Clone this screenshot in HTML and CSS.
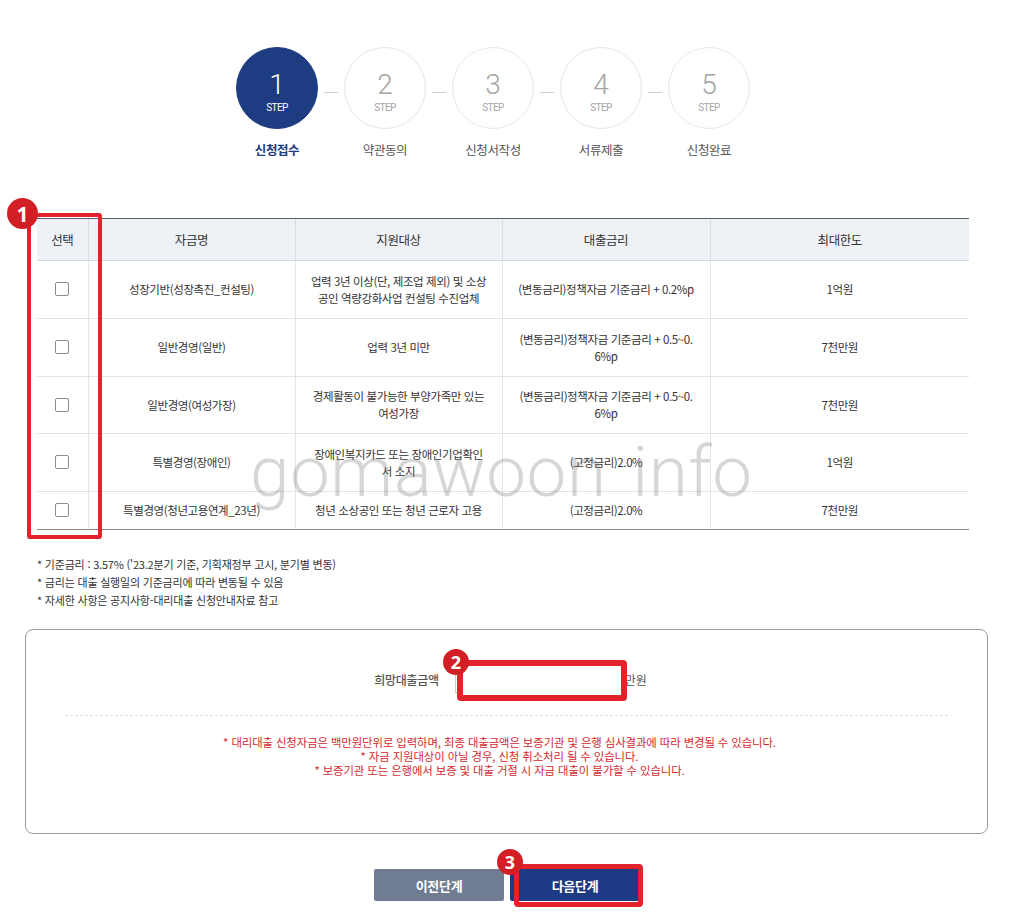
FILE: index.html
```html
<!DOCTYPE html>
<html lang="ko">
<head>
<meta charset="utf-8">
<title>신청접수</title>
<link rel="stylesheet" href="styles.css">
</head>
<body>
<div class="page">
  <div class="steps">
    <div class="step active">
      <div class="circle"><span class="num">1</span><span class="lbl">STEP</span></div>
      <div class="name">신청접수</div>
    </div>
    <div class="dash"></div>
    <div class="step">
      <div class="circle"><span class="num">2</span><span class="lbl">STEP</span></div>
      <div class="name">약관동의</div>
    </div>
    <div class="dash"></div>
    <div class="step">
      <div class="circle"><span class="num">3</span><span class="lbl">STEP</span></div>
      <div class="name">신청서작성</div>
    </div>
    <div class="dash"></div>
    <div class="step">
      <div class="circle"><span class="num">4</span><span class="lbl">STEP</span></div>
      <div class="name">서류제출</div>
    </div>
    <div class="dash"></div>
    <div class="step">
      <div class="circle"><span class="num">5</span><span class="lbl">STEP</span></div>
      <div class="name">신청완료</div>
    </div>
  </div>

  <div class="table-area">
    <table class="fund">
      <colgroup>
        <col class="c1"><col class="c2"><col class="c3"><col class="c4"><col class="c5">
      </colgroup>
      <thead>
        <tr><th>선택</th><th>자금명</th><th>지원대상</th><th>대출금리</th><th>최대한도</th></tr>
      </thead>
      <tbody>
        <tr class="r1">
          <td><input type="checkbox" class="chk"></td>
          <td>성장기반(성장촉진_컨설팅)</td>
          <td>업력 3년 이상(단, 제조업 제외) 및 소상<br>공인 역량강화사업 컨설팅 수진업체</td>
          <td>(변동금리)정책자금 기준금리 + 0.2%p</td>
          <td>1억원</td>
        </tr>
        <tr class="r2">
          <td><input type="checkbox" class="chk"></td>
          <td>일반경영(일반)</td>
          <td>업력 3년 미만</td>
          <td>(변동금리)정책자금 기준금리 + 0.5~0.<br>6%p</td>
          <td>7천만원</td>
        </tr>
        <tr class="r3">
          <td><input type="checkbox" class="chk"></td>
          <td>일반경영(여성가장)</td>
          <td>경제활동이 불가능한 부양가족만 있는<br>여성가장</td>
          <td>(변동금리)정책자금 기준금리 + 0.5~0.<br>6%p</td>
          <td>7천만원</td>
        </tr>
        <tr class="r4">
          <td><input type="checkbox" class="chk"></td>
          <td>특별경영(장애인)</td>
          <td>장애인복지카드 또는 장애인기업확인<br>서 소지</td>
          <td>(고정금리)2.0%</td>
          <td>1억원</td>
        </tr>
        <tr class="r5">
          <td><input type="checkbox" class="chk"></td>
          <td>특별경영(청년고용연계_23년)</td>
          <td>청년 소상공인 또는 청년 근로자 고용</td>
          <td>(고정금리)2.0%</td>
          <td>7천만원</td>
        </tr>
      </tbody>
    </table>

    <ul class="notes">
      <li>* 기준금리 : 3.57% ('23.2분기 기준, 기획재정부 고시, 분기별 변동)</li>
      <li>* 금리는 대출 실행일의 기준금리에 따라 변동될 수 있음</li>
      <li>* 자세한 사항은 공지사항-대리대출 신청안내자료 참고</li>
    </ul>
  </div>

  <div class="amount-box">
    <div class="amount-row">
      <span class="amount-label">희망대출금액</span>
      <input type="text" class="amount-input">
      <span class="unit">만원</span>
    </div>
    <div class="dotline"></div>
    <div class="warn">
      <p>* 대리대출 신청자금은 백만원단위로 입력하며, 최종 대출금액은 보증기관 및 은행 심사결과에 따라 변경될 수 있습니다.</p>
      <p>* 자금 지원대상이 아닐 경우, 신청 취소처리 될 수 있습니다.</p>
      <p>* 보증기관 또는 은행에서 보증 및 대출 거절 시 자금 대출이 불가할 수 있습니다.</p>
    </div>
  </div>

  <div class="buttons">
    <button class="btn prev">이전단계</button>
    <button class="btn next">다음단계</button>
  </div>

  <div class="watermark">gomawoon info</div>

  <div class="mark mark1"></div>
  <div class="badge badge1">1</div>
  <div class="mark mark2"></div>
  <div class="badge badge2">2</div>
  <div class="mark mark3"></div>
  <div class="badge badge3">3</div>
</div>
</body>
</html>
```

FILE: styles.css
```css
* { box-sizing: border-box; }
html, body { margin: 0; padding: 0; background: #fff; }
body {
  font-family: "Noto Sans CJK KR", "Noto Sans", sans-serif;
  color: #333;
  width: 1012px;
  height: 916px;
  overflow: hidden;
}
.page { position: relative; width: 1012px; height: 916px; }

/* steps */
.steps {
  display: flex;
  justify-content: center;
  align-items: flex-start;
  padding-top: 47px;
  padding-right: 26px;
}
.step { width: 82px; display: flex; flex-direction: column; align-items: center; }
.circle {
  width: 82px; height: 82px;
  border-radius: 50%;
  border: 1px solid #e6e6e6;
  background: #fff;
  display: flex; flex-direction: column; align-items: center; justify-content: center;
  color: #a5a5a5;
}
.circle .num { font-family: Roboto, "Noto Sans", sans-serif; font-weight: 300; font-size: 28px; line-height: 28px; margin-top: 9px; }
.circle .lbl { font-family: Roboto, "Noto Sans", sans-serif; font-size: 10px; line-height: 12px; letter-spacing: -0.6px; margin-top: 3px; }
.step.active .circle { background: #1e3c82; border-color: #1e3c82; color: #fff; }
.name { margin-top: 12px; font-size: 12.5px; line-height: 18px; color: #555; letter-spacing: -0.4px; white-space: nowrap; }
.step.active .name { color: #1e3c82; font-weight: 700; }
.dash { width: 14px; height: 1px; background: #cfcfcf; margin: 45px 6px 0; }

/* table */
.table-area { padding: 0 43px 0 37px; margin-top: 59px; }
.fund { width: 932px; border-collapse: collapse; table-layout: fixed; font-size: 11.5px; letter-spacing: -0.4px; color: #333; }
.fund col.c1 { width: 51px; }
.fund col.c2 { width: 207px; }
.fund col.c3 { width: 207px; }
.fund col.c4 { width: 208px; }
.fund col.c5 { width: 259px; }
.fund thead tr { height: 42px; }
.fund th {
  background: #eef1f5;
  font-weight: 400;
  font-size: 12.5px;
  color: #333;
  border-top: 1px solid #5a5f6a;
  border-bottom: 1px solid #d3d6dc;
  border-left: 1px solid #d9dde3;
  padding: 0;
}
.fund th:first-child { border-left: none; }
.fund td {
  text-align: center;
  vertical-align: middle;
  border-bottom: 1px solid #e3e3e3;
  border-left: 1px solid #e6e6e6;
  line-height: 17px;
  padding: 0 6px;
}
.fund td:first-child { border-left: none; padding: 0; }
.fund tbody tr:last-child td { border-bottom: 1px solid #8a8a8a; }
.fund tr.r1 { height: 58px; }
.fund tr.r2 { height: 58px; }
.fund tr.r3 { height: 57px; }
.fund tr.r4 { height: 58px; }
.fund tr.r5 { height: 38px; }
.chk {
  appearance: none; -webkit-appearance: none;
  width: 14px; height: 14px; margin: 3px 0 0;
  border: 1px solid #8c8c8c; border-radius: 2px; background: #fff;
}

.notes { list-style: none; margin: 25px 0 0; padding: 0; font-size: 11px; line-height: 18px; color: #333; letter-spacing: -0.2px; }

/* amount box */
.amount-box {
  margin: 20px 24px 0 25px;
  height: 205px;
  border: 1px solid #9a9a9a;
  border-radius: 8px;
  padding-top: 35px;
}
.amount-row { display: flex; justify-content: center; align-items: center; height: 28px; padding-left: 8px; }
.amount-label { font-size: 12px; font-weight: 500; color: #555; letter-spacing: -0.3px; }
.amount-input { width: 160px; height: 28px; margin: 0 10px 0 16px; border: 1px solid #ccc; background: #fff; }
.unit { font-size: 12px; color: #555; }
.dotline { margin: 22px 39px 0 39px; border-top: 1px dashed #dedede; }
.warn { margin-top: 19px; padding-right: 14px; text-align: center; color: #d42a2f; font-size: 11.4px; line-height: 14px; letter-spacing: -0.1px; }
.warn p { margin: 0; }

/* buttons */
.buttons { display: flex; justify-content: center; gap: 6px; margin-top: 35px; padding-left: 2px; }
.btn {
  width: 130px; height: 32px; border: none; border-radius: 2px;
  font-family: "Noto Sans CJK KR", sans-serif; font-size: 13px; font-weight: 700; color: #fff;
  letter-spacing: -0.3px;
}
.btn.prev { background: #6f7c92; }
.btn.next { background: #1e3a84; }

/* watermark overlay */
.watermark {
  position: absolute; left: 250px; top: 436px;
  font-family: Roboto, sans-serif; font-weight: 300; font-size: 71px; line-height: 1;
  color: rgba(120, 120, 120, 0.3);
  letter-spacing: 0.5px;
  word-spacing: 8px;
  white-space: nowrap;
  pointer-events: none;
}

/* annotation overlays */
.mark { position: absolute; border: 4px solid #e3222c; border-radius: 3px; }
.mark1 { left: 27px; top: 213px; width: 75px; height: 326px; }
.mark2 { left: 457px; top: 660px; width: 170px; height: 41px; border-width: 6px; border-radius: 4px; background: #fff; }
.mark3 { left: 514px; top: 864px; width: 129px; height: 43px; border-width: 5px; border-radius: 4px; }
.badge {
  position: absolute;
  border-radius: 50%;
  background: #d21f26;
  color: #fff;
  font-family: "Noto Sans", sans-serif;
  font-weight: 700;
  display: flex; align-items: center; justify-content: center;
}
.badge1 { left: 7px; top: 198px; width: 31px; height: 31px; font-size: 21px; }
.badge2 { left: 443px; top: 649px; width: 26px; height: 26px; font-size: 18px; }
.badge3 { left: 497px; top: 849px; width: 26px; height: 26px; font-size: 18px; }
```
